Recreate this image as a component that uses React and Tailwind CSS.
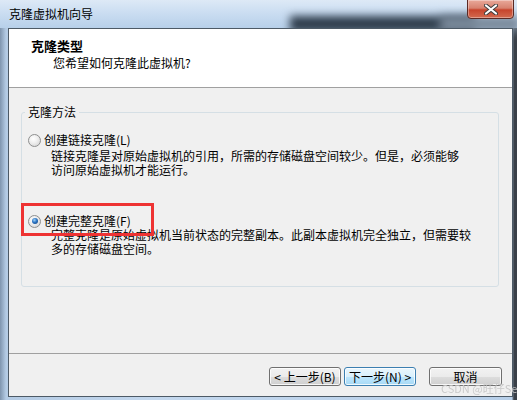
import React from "react";

const font = { fontFamily: '"Noto Sans CJK SC", "Noto Sans", sans-serif' };

function Radio({ checked }) {
  return (
    <span className="relative inline-block w-[13px] h-[13px] rounded-full border border-[#8e8f8f] bg-[radial-gradient(circle_at_40%_35%,#ffffff_0%,#f0f0f0_40%,#cfcfcf_100%)] shrink-0">
      {checked && (
        <span className="absolute left-[2.5px] top-[2.5px] w-[6px] h-[6px] rounded-full bg-[radial-gradient(circle_at_40%_35%,#9fd4f7_0%,#2d74c4_45%,#123d70_100%)]" />
      )}
    </span>
  );
}

function Button({ children, primary, w }) {
  return (
    <div
      className={
        "h-[19px] rounded-[3px] border flex items-center justify-center text-[12px] leading-none text-black shadow-[inset_0_0_0_1px_rgba(255,255,255,0.8)] " +
        (primary
          ? "border-[#3c7fb1] bg-[linear-gradient(to_bottom,#eaf6fd_0%,#d9f0fc_50%,#bee6fd_51%,#a7d9f5_100%)]"
          : "border-[#707070] bg-[linear-gradient(to_bottom,#f2f2f2_0%,#ebebeb_50%,#dddddd_51%,#cfcfcf_100%)]")
      }
      style={{ width: w }}
    >
      {children}
    </div>
  );
}

export default function App() {
  return (
    <div
      className="relative w-[517px] h-[400px] overflow-hidden bg-[linear-gradient(to_right,#7f95ae_0px,#b4cbe4_6px,#c4d8ee_30%,#b7cfe9_99%,#3a4048_99.4%)] flex flex-col"
      style={font}
    >
      {/* title bar */}
      <div className="relative h-[28px] shrink-0 flex items-center pl-[9px] bg-[linear-gradient(to_bottom,#dde9f6_0%,#c9dcf1_50%,#b7d0ea_100%)]">
        <div className="absolute left-[290px] top-[16px] w-[185px] h-[16px] bg-[#2f3d4c] blur-[4px]" />
        <div className="absolute left-[440px] top-[16px] w-[80px] h-[16px] bg-[#7a8a9b] blur-[5px]" />
        <span className="relative text-[12px] leading-[14px] text-black">克隆虚拟机向导</span>
        <div className="absolute left-[467px] top-[-1px] w-[47px] h-[20px] rounded-b-[4px] border border-[#5b2a25] bg-[linear-gradient(to_bottom,#e9a99a_0%,#d7826f_45%,#c7442c_55%,#d26a4f_100%)] flex items-center justify-center shadow-[inset_0_0_0_1px_rgba(255,255,255,0.35)]">
          <svg width="14" height="11" viewBox="0 0 14 11">
            <path d="M2 1.5 L12 9.5 M12 1.5 L2 9.5" stroke="#3c3c3c" strokeWidth="4" strokeLinecap="round" />
            <path d="M2 1.5 L12 9.5 M12 1.5 L2 9.5" stroke="#ffffff" strokeWidth="2.2" strokeLinecap="round" />
          </svg>
        </div>
      </div>

      {/* client */}
      <div className="relative ml-[8px] mr-[4px] h-[369px] border border-[#4d5a66] flex flex-col bg-[#f0f0f0] text-[12px] leading-[14px] text-black">
        {/* header */}
        <div className="h-[59px] shrink-0 bg-white border-b border-[#a0a0a0] pl-[22px] pt-[10px]">
          <div className="font-bold text-[13px] leading-[14px]">克隆类型</div>
          <div className="pl-[22px] mt-[3px]">您希望如何克隆此虚拟机?</div>
        </div>

        {/* body */}
        <div className="flex-1 flex flex-col">
          <fieldset className="mt-[17px] ml-[12px] w-[478px] h-[182px] border border-[#d5dfe5] rounded-[3px] px-0 pb-0 pt-[14px]">
            <legend className="ml-[3px] px-[3px] leading-[14px]">克隆方法</legend>
            <div className="flex items-center pl-[6px]">
              <Radio />
              <span className="ml-[3px] leading-[14px]">创建链接克隆(L)</span>
            </div>
            <div className="pl-[29px] mt-[2px] leading-[14px] whitespace-nowrap">
              <div>链接克隆是对原始虚拟机的引用，所需的存储磁盘空间较少。但是，必须能够</div>
              <div>访问原始虚拟机才能运行。</div>
            </div>
            <div className="flex items-center pl-[6px] mt-[37px]">
              <Radio checked />
              <span className="ml-[3px] leading-[14px]">创建完整克隆(F)</span>
            </div>
            <div className="pl-[29px] leading-[14px] whitespace-nowrap">
              <div>完整克隆是原始虚拟机当前状态的完整副本。此副本虚拟机完全独立，但需要较</div>
              <div>多的存储磁盘空间。</div>
            </div>
          </fieldset>

          <div className="flex-1" />
          <div className="h-px bg-[#a0a0a0]" />
          <div className="flex justify-end pt-[13px] pb-[10px] pr-[10px]">
            <Button w="72px">&lt; 上一步(B)</Button>
            <div className="w-[3px]" />
            <Button w="72px" primary>下一步(N) &gt;</Button>
            <div className="w-[13px]" />
            <Button w="73px">取消</Button>
          </div>
        </div>
      </div>

      {/* annotation red box */}
      <div className="absolute left-[21px] top-[203px] w-[133px] h-[33px] border-[3px] border-[#ee3333]" />

      {/* watermark */}
      <div className="absolute left-[441px] top-[382px] text-[11px] leading-[12px] text-[#c6c6c6] whitespace-nowrap opacity-90">
        CSDN @旺仔Sec
      </div>
    </div>
  );
}
